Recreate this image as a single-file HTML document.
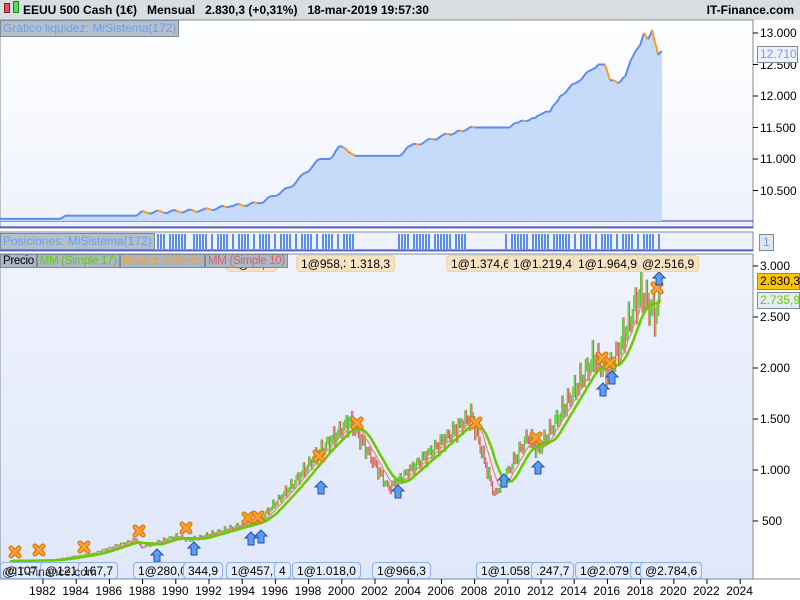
<!DOCTYPE html>
<html><head><meta charset="utf-8"><style>
*{margin:0;padding:0;box-sizing:border-box}
body{width:800px;height:600px;overflow:hidden;background:#fff;font-family:"Liberation Sans",sans-serif;position:relative}
.hdr{position:absolute;left:0;top:0;width:800px;height:20px;background:#d8dde2;font-size:12px;font-weight:bold;line-height:20px;color:#000}
.lbl{position:absolute;font-size:12px;line-height:15px;padding:0 2px;border:1px solid #7c8b96;background:#a9b8c4}
.ax{position:absolute;font-size:12px;color:#000}
.ord{position:absolute;height:17px;font-size:12px;line-height:16px;padding:0 4px;border-radius:4px}
.t{background:#f5e3c3;border:1px solid #eed3a4}
.b{background:#e4ecfa;border:1px solid #8db0e6}
</style></head><body>
<div class="hdr"><span style="position:absolute;left:4px;top:3px;width:6px;height:10px;background:#e05050;border:1px solid #802020"></span><span style="position:absolute;left:13px;top:1px;width:6px;height:12px;background:#50e050;border:1px solid #208020"></span><span style="position:absolute;left:23px">EEUU 500 Cash (1€)&nbsp;&nbsp;&nbsp;Mensual&nbsp;&nbsp;&nbsp;2.830,3 (+0,31%)&nbsp;&nbsp;&nbsp;18-mar-2019 19:57:30</span><span style="position:absolute;right:6px">IT-Finance.com</span></div>
<svg id="s" width="800" height="600" style="position:absolute;left:0;top:0" xmlns="http://www.w3.org/2000/svg">
<defs><linearGradient id="g1" x1="0" y1="0" x2="0" y2="1"><stop offset="0" stop-color="#ffffff"/><stop offset="1" stop-color="#eef2fc"/></linearGradient>
<linearGradient id="g2" x1="0" y1="0" x2="0" y2="1"><stop offset="0" stop-color="#f0f3fd"/><stop offset="1" stop-color="#dfe7fa"/></linearGradient></defs>
<rect x="0" y="20" width="753" height="208" fill="url(#g1)"/>
<rect x="0" y="20" width="753" height="208" fill="none" stroke="#7c8b96"/>
<line x1="0" y1="221" x2="753" y2="221" stroke="#3030e0"/>
<line x1="0" y1="227" x2="753" y2="227" stroke="#3030e0"/>
<rect x="0" y="232" width="753" height="19" fill="#eef2fc" stroke="#7c8b96"/>
<line x1="0" y1="250" x2="753" y2="250" stroke="#3030e0"/>
<rect x="0" y="254" width="753" height="325" fill="url(#g2)" stroke="#7c8b96"/>
<line x1="0" y1="579" x2="800" y2="579" stroke="#7c8b96"/>
<g id="eq"></g><g id="pos"></g><g id="pr"></g>
</svg>
<div class="lbl" style="left:0;top:20px;color:#6d9ef0;background:#b3c0cc">Gráfico liquidez: MiSistema(172)</div>
<div class="lbl" style="left:0;top:233px;color:#6d9ef0;background:#b3c0cc">Posiciones: MiSistema(172)</div>
<div class="lbl" style="left:759px;top:234px;color:#6d9ef0;background:#dfe6ee;padding:0 3px">1</div>
<div class="ord t" style="left:226px;top:255px">1@…,6</div>
<div class="ord t" style="left:296px;top:255px">1@958,3</div>
<div class="ord t" style="left:345px;top:255px">1.318,3</div>
<div class="ord t" style="left:446px;top:255px">1@1.374,6</div>
<div class="ord t" style="left:508px;top:255px">1@1.219,4</div>
<div class="ord t" style="left:573px;top:255px">1@1.964,9</div>
<div class="ord t" style="left:637px;top:255px">@2.516,9</div>
<div style="position:absolute;left:0;top:254px;height:17px;font-size:11.5px;line-height:15px;white-space:nowrap;letter-spacing:-0.3px">
<span class="lbl" style="position:relative;color:#000;background:#a9b8c4;font-size:11.5px">Precio</span><span class="lbl" style="position:relative;color:#66cc00;font-size:11.5px">MM (Simple 17)</span><span class="lbl" style="position:relative;color:#ff9a1e;font-size:11.5px">Mostrar órdenes</span><span class="lbl" style="position:relative;color:#e06060;font-size:11.5px">MM (Simple 10)</span></div>
<div class="ord b" style="left:0;top:562px">@107,3</div>
<div class="ord b" style="left:40px;top:562px">@121,4</div>
<div class="ord b" style="left:78px;top:562px">167,7</div>
<div class="ord b" style="left:133px;top:562px">1@280,0</div>
<div class="ord b" style="left:183px;top:562px">344,9</div>
<div class="ord b" style="left:226px;top:562px">1@457,5</div>
<div class="ord b" style="left:274px;top:562px">4</div>
<div class="ord b" style="left:292px;top:562px">1@1.018,0</div>
<div class="ord b" style="left:372px;top:562px">1@966,3</div>
<div class="ord b" style="left:476px;top:562px">1@1.058,2</div>
<div class="ord b" style="left:531px;top:562px">.247,7</div>
<div class="ord b" style="left:575px;top:562px">1@2.079,3</div>
<div class="ord b" style="left:630px;top:562px">0</div>
<div class="ord b" style="left:640px;top:562px">@2.784,6</div>
<div style="position:absolute;left:2px;top:565px;font-size:12px;color:#333">@IT-Finance.com</div>
<div id="ax"></div>
<div style="position:absolute;left:757px;top:46px;width:41px;height:17px;border:1px solid #7c8b96;background:#eef2fa;color:#6d9ef0;font-size:12px;line-height:15px;padding-left:2px">12.710</div>
<div style="position:absolute;left:757px;top:273px;width:43px;height:17px;border:1px solid #7c8b96;background:#ffc400;color:#000;font-size:12px;line-height:15px;padding-left:2px">2.830,3</div>
<div style="position:absolute;left:757px;top:292px;width:43px;height:17px;border:1px solid #7c8b96;background:#e6ecf4;color:#66cc00;font-size:12px;line-height:15px;padding-left:2px">2.735,9</div>
<script>
var NS="http://www.w3.org/2000/svg";
function el(p,t,a){var e=document.createElementNS(NS,t);for(var k in a)e.setAttribute(k,a[k]);p.appendChild(e);return e}
var svg=document.getElementById('s');
var ax=document.getElementById('ax');
function txt(x,y,s){var d=document.createElement('div');d.className='ax';d.style.left=x+'px';d.style.top=y+'px';d.textContent=s;ax.appendChild(d)}
[[13,"13.000"],[12.5,"12.500"],[12,"12.000"],[11.5,"11.500"],[11,"11.000"],[10.5,"10.500"]].forEach(function(v){var y=222-(v[0]-10)*63;el(svg,'line',{x1:753,y1:y,x2:758,y2:y,stroke:'#000'});txt(760,y-7,v[1])});
[[3000,"3.000"],[2500,"2.500"],[2000,"2.000"],[1500,"1.500"],[1000,"1.000"],[500,"500"]].forEach(function(v){var y=572-v[0]*0.102;el(svg,'line',{x1:753,y1:y,x2:758,y2:y,stroke:'#000'});txt(v[0]==500?762:760,y-7,v[1])});
for(var yr=1982;yr<=2024;yr+=2){var x=43+(yr-1982)*16.6;el(svg,'line',{x1:x,y1:579,x2:x,y2:584,stroke:'#000'});txt(x-14,584,yr)}
var E=[[0,10.05],[60,10.05],[65,10.1],[135,10.1],[140,10.15],[200,10.18],[230,10.25],[260,10.3],[290,10.55],[320,11],[330,11],[340,11.2],[350,11.1],[355,11.05],[400,11.05],[410,11.2],[440,11.35],[460,11.45],[475,11.5],[510,11.5],[520,11.6],[535,11.65],[540,11.7],[550,11.75],[560,12],[575,12.2],[590,12.4],[598,12.5],[605,12.5],[610,12.25],[618,12.2],[625,12.3],[632,12.6],[640,12.8],[644,13],[648,12.9],[652,13.05],[656,12.8],[658,12.65],[662,12.7]];
function ey(v){return 222-(v-10)*63}
var pts=[];for(var i=0;i<E.length;i++){var a=E[i];if(i>0){var b=E[i-1];for(var x=b[0]+3;x<a[0];x+=3){var t=(x-b[0])/(a[0]-b[0]);pts.push([x,ey(b[1]+(a[1]-b[1])*t)+(a[1]!=b[1]?Math.sin(x*1.7)*1.5:0)])}}pts.push([a[0],ey(a[1])])}
var d='M0,221 ';pts.forEach(function(p){d+='L'+p[0]+','+p[1].toFixed(1)+' '});d+='L662,221Z';
el(document.getElementById('eq'),'path',{d:d,fill:'#c6dafa'});
var g=document.getElementById('eq');
for(var i=1;i<pts.length;i++){var dn=pts[i][1]>pts[i-1][1]+0.5;el(g,'line',{x1:pts[i-1][0],y1:pts[i-1][1],x2:pts[i][0],y2:pts[i][1],stroke:dn?'#ff9a1e':'#5b8def','stroke-width':2})}
var P=[[157,185],[193,355],[398,465],[505,660]];var pg=document.getElementById('pos');
P.forEach(function(r){for(var x=r[0];x<r[1];x+=3){if(Math.sin(x*0.9)>-0.8)el(pg,'rect',{x:x,y:234,width:2,height:15,fill:'#5b8def'})}});
var K=[[1980,110],[1982.5,115],[1985,180],[1987.6,320],[1987.9,240],[1990,350],[1990.8,310],[1994,460],[1995,500],[1997,850],[1998.5,1150],[2000.5,1480],[2002.8,820],[2003.3,880],[2007.8,1530],[2009.2,750],[2011.2,1330],[2011.8,1180],[2015.2,2100],[2016.1,1930],[2018,2750],[2018.9,2500],[2019.2,2830]];
function px(yr){return 43+(yr-1982)*16.6}
function py(v){return 572-v*0.102}
var M=[];for(var yr=1980;yr<=2019.2;yr+=1/12){var j=0;while(j<K.length-2&&K[j+1][0]<yr)j++;var a=K[j],b=K[j+1];var t=Math.min(1,(yr-a[0])/(b[0]-a[0]));var v=a[1]+(b[1]-a[1])*t;v*=1+0.04*Math.sin(yr*17.3)+0.03*Math.sin(yr*41.1);M.push([yr,v])}
var pr=document.getElementById('pr');
function ma(n){var s='';for(var i=0;i<M.length;i++){var st=Math.max(0,i-n+1),sum=0;for(var k=st;k<=i;k++)sum+=M[k][1];s+=(i?'L':'M')+px(M[i][0]).toFixed(1)+','+py(sum/(i-st+1)).toFixed(1)}return s}
for(var i=1;i<M.length;i++){var up=M[i][1]>=M[i-1][1];var o=M[i-1][1],c=M[i][1];var hi=Math.max(o,c)*1.03,lo=Math.min(o,c)*0.97;var x=px(M[i][0]);el(pr,'line',{x1:x,y1:py(hi),x2:x,y2:py(lo),stroke:up?'#55cc33':'#e06060','stroke-width':1.2})}
el(pr,'path',{d:ma(10),fill:'none',stroke:'#f08080','stroke-width':1.2});
el(pr,'path',{d:ma(17),fill:'none',stroke:'#66cc00','stroke-width':2.5});
function cross(x,y){el(pr,'path',{d:'M'+(x-4)+','+(y-4)+'L'+(x+4)+','+(y+4)+'M'+(x+4)+','+(y-4)+'L'+(x-4)+','+(y+4),stroke:'#d07000','stroke-width':5,'stroke-linecap':'round'});el(pr,'path',{d:'M'+(x-4)+','+(y-4)+'L'+(x+4)+','+(y+4)+'M'+(x+4)+','+(y-4)+'L'+(x-4)+','+(y+4),stroke:'#ffa030','stroke-width':3,'stroke-linecap':'round'})}
function arrow(x,y){el(pr,'path',{d:'M'+x+','+y+'l6,6h-3v7h-6v-7h-3z',fill:'#5b9cf0',stroke:'#2050b0','stroke-width':1})}
[[15,552],[39,550],[84,547],[139,531],[186,528],[248,518],[258,517],[319,456],[357,423],[476,423],[536,438],[602,358],[610,363],[657,288]].forEach(function(p){cross(p[0],p[1])});
[[157,549],[194,542],[251,532],[261,530],[321,481],[398,485],[504,474],[538,461],[603,383],[612,371],[659,272]].forEach(function(p){arrow(p[0],p[1])});
</script>
</body></html>
